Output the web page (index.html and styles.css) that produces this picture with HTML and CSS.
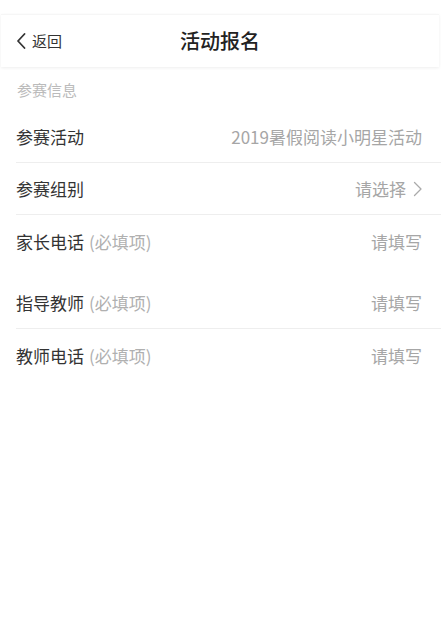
FILE: index.html
```html
<!DOCTYPE html>
<html lang="zh-CN">
<head>
<meta charset="utf-8">
<title>活动报名</title>
<link rel="stylesheet" href="styles.css">
</head>
<body>
<div class="page">
  <header class="navbar">
    <div class="back">
      <svg class="back-icon" width="10" height="16" viewBox="0 0 10 16"><path d="M8.5 1 L2 8 L8.5 15" fill="none" stroke="#333" stroke-width="1.8" stroke-linecap="round" stroke-linejoin="round"/></svg>
      <span class="back-text">返回</span>
    </div>
    <div class="title">活动报名</div>
  </header>
  <div class="section-title">参赛信息</div>
  <div class="list">
    <div class="row">
      <span class="label">参赛活动</span>
      <span class="value">2019暑假阅读小明星活动</span>
    </div>
    <div class="row">
      <span class="label">参赛组别</span>
      <span class="value">请选择<svg class="arrow" width="10" height="16" viewBox="0 0 10 16"><path d="M1.5 1.5 L8 8 L1.5 14.5" fill="none" stroke="#aaa" stroke-width="1.3" stroke-linecap="round" stroke-linejoin="round"/></svg></span>
    </div>
    <div class="row row-plain row-gap">
      <span class="label">家长电话<span class="hint">(必填项)</span></span>
      <span class="value">请填写</span>
    </div>
    <div class="row">
      <span class="label">指导教师<span class="hint">(必填项)</span></span>
      <span class="value">请填写</span>
    </div>
    <div class="row row-plain">
      <span class="label">教师电话<span class="hint">(必填项)</span></span>
      <span class="value">请填写</span>
    </div>
  </div>
</div>
</body>
</html>
```
FILE: styles.css
```css
html, body {
  margin: 0;
  padding: 0;
  background: #fff;
}
body {
  font-family: "Noto Sans CJK SC", "Noto Sans", sans-serif;
  color: #333;
}
.page {
  width: 441px;
  padding-top: 14px;
}
.navbar {
  position: relative;
  width: 438px;
  margin-left: 1px;
  height: 53px;
  background: #fff;
  box-shadow: 0 1px 3px rgba(0, 0, 0, 0.07);
  border-top: 1px solid #f6f6f6;
  box-sizing: border-box;
  display: flex;
  align-items: center;
  justify-content: center;
}
.back {
  position: absolute;
  left: 15px;
  top: 0;
  bottom: 0;
  display: flex;
  align-items: center;
  gap: 6px;
}
.back-icon {
  display: block;
}
.back-text {
  font-size: 15px;
  color: #333;
  line-height: 20px;
}
.title {
  font-size: 20px;
  font-weight: 500;
  color: #222;
  line-height: 26px;
}
.section-title {
  height: 44px;
  box-sizing: border-box;
  padding-left: 17px;
  padding-top: 12px;
  font-size: 15px;
  line-height: 22px;
  color: #bbb;
}
.list {
  padding-left: 16px;
}
.row {
  height: 52px;
  box-sizing: border-box;
  border-bottom: 1px solid #eee;
  padding-right: 19px;
  padding-top: 1px;
  display: flex;
  align-items: center;
  justify-content: space-between;
  font-size: 17px;
  line-height: 24px;
}
.row-plain {
  border-bottom: none;
}
.row-gap {
  margin-bottom: 10px;
}
.label {
  color: #333;
  display: flex;
  align-items: center;
}
.hint {
  color: #b0b0b0;
  margin-left: 5px;
}
.value {
  color: #a6a6a6;
  display: flex;
  align-items: center;
}
.arrow {
  display: block;
  margin-left: 7px;
  margin-right: -1px;
}
```
